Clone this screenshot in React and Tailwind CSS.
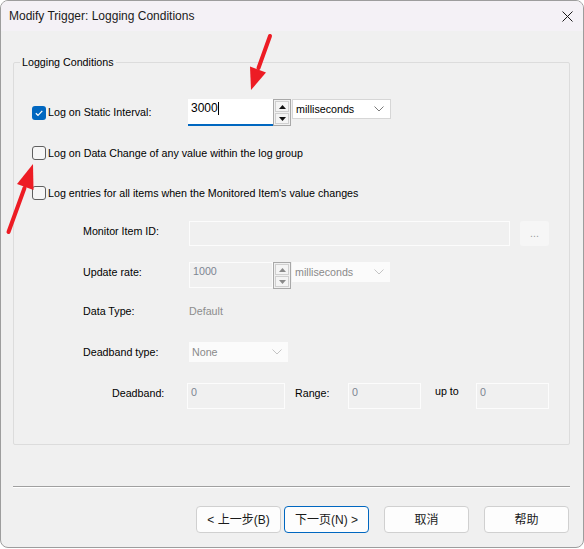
import React from "react";

const Checkbox = ({ checked }) =>
  checked ? (
    <div className="w-[14px] h-[14px] shrink-0 rounded-[3px] bg-[#0067c0] flex items-center justify-center">
      <svg width="10" height="10" viewBox="0 0 10 10">
        <path d="M1.8 5.2 L4 7.3 L8.3 2.8" fill="none" stroke="white" strokeWidth="1.2" />
      </svg>
    </div>
  ) : (
    <div className="w-[14px] h-[14px] shrink-0 rounded-[3px] border border-[#5f5f5f] bg-[#f6f6f6]" />
  );

const Tri = ({ up, disabled }) => (
  <svg width="7" height="4" viewBox="0 0 7 4">
    <path d={up ? "M0 4 L3.5 0 L7 4 Z" : "M0 0 L3.5 4 L7 0 Z"} fill={disabled ? "#8a8a8a" : "#111"} />
  </svg>
);

const Spinner = ({ disabled }) => (
  <div className="w-[18px] h-[27px] shrink-0 border border-[#a8a8a8] bg-[#f0f0f0] p-[1px] flex flex-col gap-[1px]">
    <div className="flex-1 border border-[#cfcfcf] bg-[#f4f4f4] flex items-center justify-center">
      <Tri up disabled={disabled} />
    </div>
    <div className="flex-1 border border-[#cfcfcf] bg-[#f4f4f4] flex items-center justify-center">
      <Tri disabled={disabled} />
    </div>
  </div>
);

const Chevron = ({ color }) => (
  <svg width="10" height="6" viewBox="0 0 10 6">
    <path d="M0.5 0.5 L5 5 L9.5 0.5" fill="none" stroke={color} strokeWidth="1" />
  </svg>
);

const Combo = ({ text, disabled, className }) => (
  <div
    className={
      disabled
        ? "h-[20px] shrink-0 bg-[#fbfbfb] flex items-center justify-between pl-[3px] pr-[6px] text-[#8a8a8a] " + className
        : "h-[20px] shrink-0 bg-white border border-[#d6d6d6] flex items-center justify-between pl-[3px] pr-[6px] text-black " + className
    }
  >
    <span>{text}</span>
    <Chevron color={disabled ? "#c4c4c4" : "#7a7a7a"} />
  </div>
);

const DisabledInput = ({ value, className }) => (
  <div className={"shrink-0 bg-[#f0f0f0] border border-[#fcfcfc] pl-[3px] pt-[1px] leading-[14px] text-[#7d8592] " + className}>
    {value}
  </div>
);

const Btn = ({ children, focused, className }) => (
  <div
    className={
      "w-[85px] h-[27px] shrink-0 rounded-[4px] bg-[#fdfdfd] flex items-center justify-center text-[12px] text-[#1a1a1a] font-['Liberation_Sans','Noto_Sans_CJK_SC',sans-serif] " +
      (focused ? "border border-[#0067c0] " : "border border-[#d0d0d0] ") +
      (className || "")
    }
  >
    {children}
  </div>
);

export default function App() {
  return (
    <div className="w-[584px] h-[549px] bg-white relative font-['Liberation_Sans',sans-serif] text-[10.7px] text-black">
      <div className="w-[584px] h-[548px] rounded-[8px] border border-[#9d9d9d] overflow-hidden flex flex-col bg-[#f0f0f0]">
        <div className="h-[30px] shrink-0 bg-[#f4f1f6] flex items-center justify-between pl-[8px] pr-[10px]">
          <span className="text-[12px] text-[#1a1a1a]">Modify Trigger: Logging Conditions</span>
          <svg width="11" height="11" viewBox="0 0 11 11">
            <path d="M0.5 0.5 L10.5 10.5 M10.5 0.5 L0.5 10.5" stroke="#1a1a1a" strokeWidth="1" />
          </svg>
        </div>

        <fieldset className="ml-[12px] w-[557px] mt-[24px] h-[390px] border border-[#dcdcdc] rounded-[2px]">
          <legend className="ml-[6px] px-[2px] leading-[14px]">Logging Conditions</legend>

          <div className="flex flex-col">
            <div className="mt-[30px] h-[27px] flex items-start pl-[18px]">
              <div className="w-[156px] h-[27px] flex items-center">
                <Checkbox checked />
                <span className="ml-[2px]">Log on Static Interval:</span>
              </div>
              <div className="w-[85px] h-[27px] bg-white border-b-2 border-[#0067c0] pl-[3px] pt-[2px] leading-[14px] flex items-start">
                <span className="text-[12px]">3000</span>
                <span className="w-[1px] h-[13px] bg-black mt-[1px]" />
              </div>
              <Spinner />
              <Combo text="milliseconds" className="ml-[1px] w-[99px]" />
            </div>

            <div className="mt-[17px] h-[20px] flex items-center pl-[18px]">
              <Checkbox />
              <span className="ml-[2px]">Log on Data Change of any value within the log group</span>
            </div>

            <div className="mt-[20px] h-[20px] flex items-center pl-[18px]">
              <Checkbox />
              <span className="ml-[2px]">Log entries for all items when the Monitored Item's value changes</span>
            </div>

            <div className="mt-[18px] h-[26px] flex items-start pl-[69px]">
              <span className="w-[106px] pt-[3px] leading-[14px]">Monitor Item ID:</span>
              <DisabledInput value="" className="w-[321px] h-[25px]" />
              <div className="ml-[10px] w-[29px] h-[25px] rounded-[3px] bg-[#f6f6f6] flex items-center justify-center text-[#a0a0a0]">
                ...
              </div>
            </div>

            <div className="mt-[15px] h-[27px] flex items-start pl-[69px]">
              <span className="w-[106px] pt-[3px] leading-[14px]">Update rate:</span>
              <DisabledInput value="1000" className="w-[84px] h-[26px]" />
              <Spinner disabled />
              <Combo text="milliseconds" disabled className="ml-[1px] w-[98px]" />
            </div>

            <div className="mt-[15px] h-[14px] flex items-center pl-[69px] leading-[14px]">
              <span className="w-[106px]">Data Type:</span>
              <span className="text-[#8d8d8d]">Default</span>
            </div>

            <div className="mt-[24px] h-[20px] flex items-center pl-[69px]">
              <span className="w-[106px]">Deadband type:</span>
              <Combo text="None" disabled className="w-[99px]" />
            </div>

            <div className="mt-[21px] h-[26px] flex items-start pl-[98px] leading-[14px]">
              <span className="w-[75px] pt-[3px]">Deadband:</span>
              <DisabledInput value="0" className="w-[98px] h-[26px]" />
              <span className="w-[63px] pl-[10px] pt-[3px]">Range:</span>
              <DisabledInput value="0" className="w-[73px] h-[26px]" />
              <span className="w-[55px] pl-[14px] pt-[1px]">up to</span>
              <DisabledInput value="0" className="w-[73px] h-[26px]" />
            </div>
          </div>
        </fieldset>

        <div className="ml-[12px] w-[557px] mt-[41px] h-[1px] bg-[#a0a0a0]" />
        <div className="ml-[12px] w-[557px] h-[1px] bg-white" />

        <div className="mt-[18px] flex pl-[195px]">
          <Btn>&lt; 上一步(B)</Btn>
          <Btn focused className="ml-[3px]">下一页(N) &gt;</Btn>
          <Btn className="ml-[15px]">取消</Btn>
          <Btn className="ml-[15px]">帮助</Btn>
        </div>
      </div>

      <svg className="absolute inset-0 pointer-events-none" width="584" height="549" viewBox="0 0 584 549">
        <line x1="270" y1="36" x2="258.5" y2="68" stroke="#ed1c24" strokeWidth="4" strokeLinecap="round" />
        <polygon points="251,90 266,72.5 250,66.5" fill="#ed1c24" />
        <line x1="8.5" y1="232" x2="24.5" y2="188" stroke="#ed1c24" strokeWidth="4" strokeLinecap="round" />
        <polygon points="33,164 33.5,190 17,184" fill="#ed1c24" />
      </svg>
    </div>
  );
}
